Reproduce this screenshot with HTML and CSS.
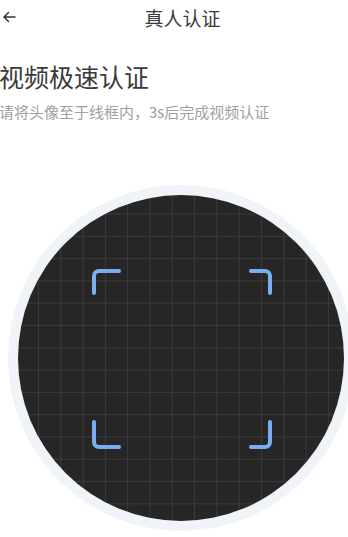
FILE: index.html
```html
<!DOCTYPE html>
<html lang="zh-CN">
<head>
<meta charset="utf-8">
<title>真人认证</title>
<link rel="stylesheet" href="styles.css">
</head>
<body>
<div class="page">
  <header class="topbar">
    <svg class="back" width="14" height="12" viewBox="0 0 14 12"><path d="M13 6H2M6.5 1.5L2 6l4.5 4.5" fill="none" stroke="#333" stroke-width="1.5" stroke-linecap="round" stroke-linejoin="round"/></svg>
    <div class="title">真人认证</div>
  </header>
  <h1 class="heading">视频极速认证</h1>
  <p class="sub">请将头像至于线框内，3s后完成视频认证</p>
  <div class="camera">
    <div class="ring">
      <div class="view">
        <svg class="frame" width="180" height="180" viewBox="0 0 180 180">
          <g fill="none" stroke="#7aaef2" stroke-width="4" stroke-linecap="round">
            <path d="M27 2H7A5 5 0 0 0 2 7V24"/>
            <path d="M159 2H173A5 5 0 0 1 178 7V24"/>
            <path d="M27 178H7A5 5 0 0 1 2 173V153"/>
            <path d="M159 178H173A5 5 0 0 0 178 173V153"/>
          </g>
        </svg>
      </div>
    </div>
  </div>
</div>
</body>
</html>
```
FILE: styles.css
```css
html, body {
  margin: 0;
  padding: 0;
  background: #ffffff;
}
body {
  font-family: "Noto Sans CJK SC", "Noto Sans", sans-serif;
  width: 348px;
  height: 537px;
  overflow: hidden;
}
.page {
  width: 348px;
}
.topbar {
  position: relative;
  height: 36px;
  display: flex;
  align-items: center;
  justify-content: center;
}
.back {
  position: absolute;
  left: 2px;
  top: 11px;
}
.title {
  font-size: 19px;
  line-height: 36px;
  color: #3a3a3a;
  margin-left: 17px;
}
.heading {
  margin: 23px 0 0 -1px;
  font-size: 25px;
  line-height: 34px;
  font-weight: 400;
  color: #3a3a3a;
}
.sub {
  margin: 9px 0 0 -1px;
  font-size: 15px;
  line-height: 20px;
  color: #a0a0a0;
}
.camera {
  margin-top: 63px;
  padding-left: 8px;
}
.ring {
  width: 326px;
  height: 326px;
  border: 10px solid #f0f4f9;
  border-radius: 50%;
}
.view {
  position: relative;
  width: 326px;
  height: 326px;
  border-radius: 50%;
  background-color: #262626;
  background-image:
    linear-gradient(to right, #3b3b3b 1px, transparent 1px),
    linear-gradient(to bottom, #3b3b3b 1px, transparent 1px);
  background-size: 22.3px 22.3px;
  background-position: 20px 18.5px;
  overflow: hidden;
}
.frame {
  position: absolute;
  left: 74px;
  top: 74px;
}
```
